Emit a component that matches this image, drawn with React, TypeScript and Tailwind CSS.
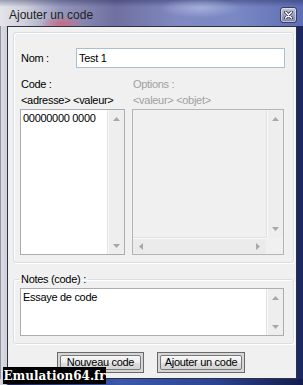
import React from "react";

type Dir = "up" | "down" | "left" | "right";

// little scrollbar triangle, Vista style
function Arrow({ dir, color = "#a8a8a8" }: { dir: Dir; color?: string }) {
  const vertical = dir === "up" || dir === "down";
  const points: Record<Dir, string> = {
    up: "0,4 3.5,0 7,4",
    down: "0,0 3.5,4 7,0",
    left: "4,0 0,3.5 4,7",
    right: "0,0 4,3.5 0,7",
  };
  return (
    <svg width={vertical ? 7 : 4} height={vertical ? 4 : 7} viewBox={vertical ? "0 0 7 4" : "0 0 4 7"}>
      <polygon points={points[dir]} fill={color} />
    </svg>
  );
}

function VScroll({ className = "" }: { className?: string }) {
  return (
    <div className={`w-[17px] shrink-0 flex flex-col justify-between bg-[#eeeeee] border-l border-[#e2e2e2] shadow-[inset_1px_0_0_#fafafa] ${className}`}>
      <div className="h-[17px] flex items-center justify-center">
        <Arrow dir="up" />
      </div>
      <div className="h-[17px] flex items-center justify-center">
        <Arrow dir="down" />
      </div>
    </div>
  );
}

function WinButton({ label, width }: { label: string; width: string }) {
  return (
    <div className={`${width} h-[21px] border border-[#6a6a6a] bg-[#d6d6d6] p-[2px]`}>
      <div className="h-full rounded-[2px] border border-[#7a7a7a] bg-[linear-gradient(#f7f7f7,#ececec_50%,#dedede_51%,#d4d4d4)] flex items-center justify-center text-[11px] leading-none text-black">
        {label}
      </div>
    </div>
  );
}

function CloseButton() {
  return (
    <div className="w-[17px] h-[16px] rounded-[3px] border border-[#3c4060] bg-[linear-gradient(#c4c8dc,#9aa0c0_50%,#8088b0)] shadow-[inset_0_0_0_1px_rgba(255,255,255,0.45)] flex items-center justify-center">
      <svg width="9" height="8" viewBox="0 0 9 8">
        <path d="M1.5 1 L7.5 7 M7.5 1 L1.5 7" stroke="#2a2d44" strokeWidth="3" strokeLinecap="round" />
        <path d="M1.5 1 L7.5 7 M7.5 1 L1.5 7" stroke="#ffffff" strokeWidth="1.6" strokeLinecap="round" />
      </svg>
    </div>
  );
}

export default function App() {
  return (
    <div className="relative w-[303px] h-[385px] overflow-hidden flex flex-col bg-[linear-gradient(to_right,#4a4a58_0px,#dcdce2_1px,#d2d2dc_5px,#8a8eb8_40%,#6a78b4_70%,#1c2860_98%)] font-['Liberation_Sans',Arial,sans-serif]">
      {/* title bar (aero glass) */}
      <div className="h-[26px] shrink-0 flex items-center justify-between pt-[4px] pl-[9px] pr-[6px] bg-[radial-gradient(ellipse_22px_8px_at_62px_24px,rgba(214,96,120,0.85),transparent),radial-gradient(ellipse_40px_10px_at_200px_8px,rgba(190,200,235,0.6),transparent),linear-gradient(to_bottom,rgba(20,24,70,0.35),transparent_7px),linear-gradient(to_right,#e4e4ea_0%,#cfd0dc_8%,#9496bc_20%,#6f70a0_38%,#8088c0_58%,#7a88c4_78%,#5e6eb4_100%)]">
        <span className="text-[12px] leading-none text-[#222]">Ajouter un code</span>
        <CloseButton />
      </div>

      {/* client area */}
      <div className="ml-[7px] mr-[6px] h-[353px] shrink-0 border border-[#2e3140] bg-[#f0f0f0] flex flex-col text-[11px] tracking-[-0.3px] text-black">
        <div className="ml-[5px] mt-[5px] w-[281px] h-[231px] rounded-[3px] border border-[#d5dfe5] shadow-[inset_1px_1px_0_#ffffff,1px_1px_0_#ffffff] pl-[6px] pt-[15px]">
          <div className="flex items-center h-[20px]">
            <span className="w-[56px] pl-[1px]">Nom :</span>
            <div className="w-[209px] h-[20px] border border-[#a9bfd6] bg-white px-[2px] flex items-center">
              Test 1
            </div>
          </div>

          <div className="mt-[8px] flex">
            <div className="w-[105px]">
              <div className="leading-[16px] pl-[1px]">Code :</div>
              <div className="leading-[16px] pl-[1px]">&lt;adresse&gt; &lt;valeur&gt;</div>
              <div className="mt-[1px] h-[146px] border border-[#abadb3] bg-white flex">
                <div className="flex-1 pl-[2px] leading-[16px]">00000000 0000</div>
                <VScroll />
              </div>
            </div>

            <div className="ml-[7px] w-[152px] text-[#a0a0a0]">
              <div className="leading-[16px] pl-[1px]">Options :</div>
              <div className="leading-[16px] pl-[1px]">&lt;valeur&gt; &lt;objet&gt;</div>
              <div className="mt-[1px] h-[146px] border border-[#b5b5b5] bg-[#f0f0f0] flex flex-col">
                <div className="flex flex-1">
                  <div className="flex-1" />
                  <VScroll className="bg-[#ebebeb]" />
                </div>
                <div className="h-[17px] flex">
                  <div className="flex-1 flex items-center justify-between bg-[#ebebeb] border-t border-[#e0e0e0] shadow-[inset_0_1px_0_#fafafa] px-[6px]">
                    <Arrow dir="left" />
                    <Arrow dir="right" />
                  </div>
                  <div className="w-[17px] bg-[#f0f0f0]" />
                </div>
              </div>
            </div>
          </div>
        </div>

        <fieldset className="ml-[5px] mt-[8px] w-[281px] rounded-[3px] border border-[#d5dfe5] shadow-[inset_1px_1px_0_#ffffff,1px_1px_0_#ffffff] pb-[7px]">
          <legend className="ml-[5px] px-[2px] leading-[16px]">Notes (code) :</legend>
          <div className="ml-[6px] mt-[1px] w-[264px] h-[48px] border border-[#abadb3] bg-white flex">
            <div className="flex-1 pl-[2px] leading-[16px]">Essaye de code</div>
            <VScroll />
          </div>
        </fieldset>

        <div className="mt-[8px] ml-[49px] flex gap-[13px]">
          <WinButton label="Nouveau code" width="w-[87px]" />
          <WinButton label="Ajouter un code" width="w-[88px]" />
        </div>
      </div>

      {/* bottom frame */}
      <div className="flex-1 bg-[linear-gradient(to_right,#d8d8e0_0px,#c8c8d4_6px,#1c2658_8px,#3a58ac_40%,#2c4494_70%,#141c4c_100%)]" />

      {/* watermark */}
      <div className="absolute left-[3px] top-[367px] w-[103px] h-[17px] bg-black flex items-center justify-center">
        <span className="font-['DejaVu_Serif',serif] font-bold text-[12px] leading-none text-white">Emulation64.fr</span>
      </div>
    </div>
  );
}
